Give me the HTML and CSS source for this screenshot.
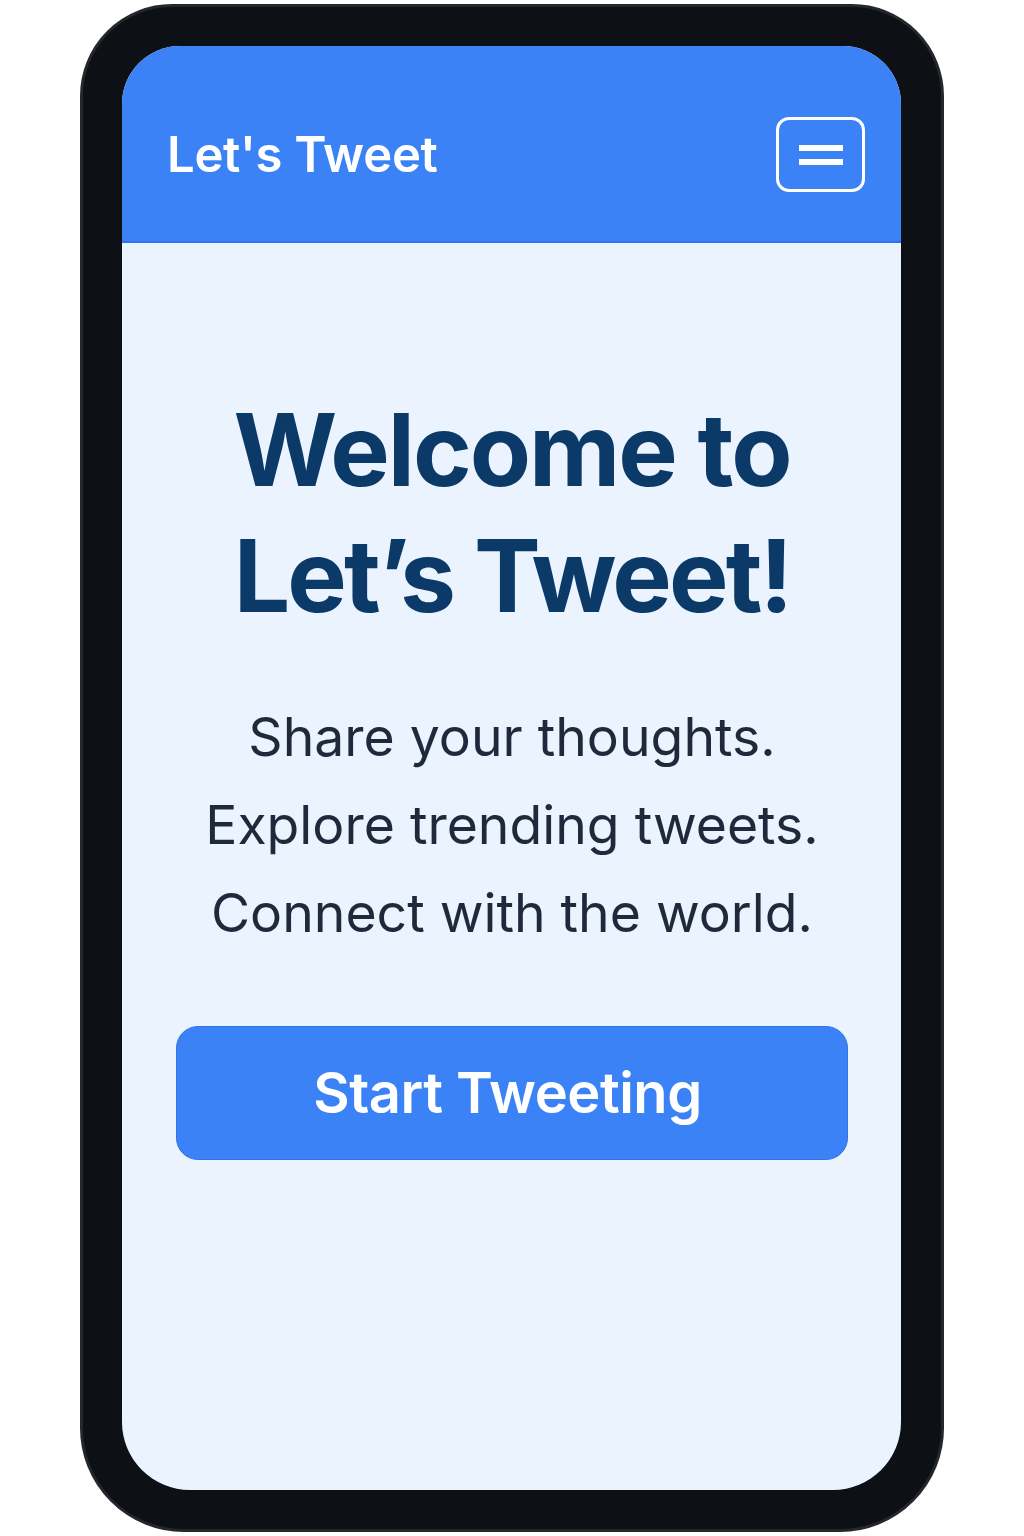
FILE: index.html
```html
<!DOCTYPE html>
<html lang="en">
<head>
<meta charset="utf-8">
<title>Let's Tweet</title>
<link rel="stylesheet" href="styles.css">
</head>
<body>
<div class="phone">
  <div class="screen">
    <header class="topbar">
      <div class="brand">Let's Tweet</div>
      <button class="menu" aria-label="Menu">
        <span class="bar"></span>
        <span class="bar"></span>
      </button>
    </header>
    <main class="hero">
      <h1 class="title">Welcome to<br><span class="title-tight">Let’s Tweet!</span></h1>
      <p class="lead">Share your thoughts.<br>Explore trending tweets.<br>Connect with the world.</p>
      <button class="cta">Start Tweeting</button>
    </main>
  </div>
</div>
</body>
</html>
```
FILE: styles.css
```css
html, body {
  margin: 0;
  padding: 0;
  background: #ffffff;
}
body {
  font-family: Inter, "Noto Sans", "Liberation Sans", sans-serif;
  padding-top: 4px;
}
.phone {
  box-sizing: border-box;
  width: 864px;
  height: 1528px;
  margin: 0 auto;
  padding: 39px 40px 39px 39px;
  background: #0d1014;
  border: 3px solid #25272c;
  border-radius: 92px 92px 104px 104px;
}
.screen {
  box-sizing: border-box;
  width: 100%;
  height: 100%;
  background: #eaf3fe;
  border-radius: 58px 58px 68px 68px;
  overflow: hidden;
  display: flex;
  flex-direction: column;
}
.topbar {
  box-sizing: border-box;
  height: 197px;
  flex: none;
  background: #3b82f6;
  border-bottom: 2px solid #2f74ec;
  display: flex;
  align-items: center;
  justify-content: space-between;
  padding: 22px 36px 0 45px;
}
.brand {
  color: #ffffff;
  font-size: 49px;
  font-weight: 600;
  letter-spacing: -0.3px;
}
.menu {
  box-sizing: border-box;
  width: 89px;
  height: 75px;
  border: 3px solid #ffffff;
  border-radius: 13px;
  background: transparent;
  display: flex;
  flex-direction: column;
  align-items: center;
  justify-content: center;
  gap: 8px;
  padding: 0;
}
.bar {
  display: block;
  width: 44px;
  height: 6px;
  background: #ffffff;
}
.hero {
  display: flex;
  flex-direction: column;
  align-items: center;
  padding: 144px 53px 0 54px;
}
.title {
  margin: 0;
  color: #0b3a68;
  font-size: 100px;
  line-height: 126px;
  font-weight: 700;
  letter-spacing: -2px;
  text-align: center;
}
.title-tight {
  letter-spacing: -2.9px;
}
.lead {
  margin: 54px 0 0;
  color: #1e293b;
  font-size: 53.5px;
  line-height: 88px;
  font-weight: 400;
  text-align: center;
}
.cta {
  box-sizing: border-box;
  margin-top: 69px;
  width: 100%;
  height: 134px;
  padding: 0 9px 0 0;
  background: #3b82f6;
  border: 1.5px solid #2f74ec;
  border-radius: 22px;
  color: #ffffff;
  font-family: inherit;
  font-size: 56px;
  font-weight: 600;
  letter-spacing: -0.5px;
}
```
